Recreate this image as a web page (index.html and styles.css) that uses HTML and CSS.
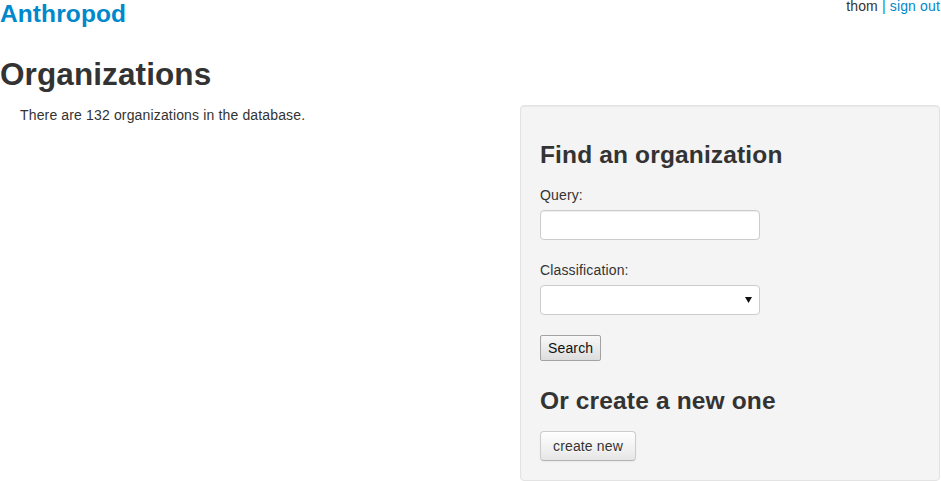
FILE: index.html
```html
<!DOCTYPE html>
<html lang="en">
<head>
<meta charset="utf-8">
<title>Organizations - Anthropod</title>
<link rel="stylesheet" href="styles.css">
</head>
<body>
<div class="container">
  <header class="topbar">
    <a class="brand" href="#">Anthropod</a>
    <div class="usernav">thom <span class="sep">|</span> <a href="#">sign out</a></div>
  </header>
  <h2 class="page-title">Organizations</h2>
  <div class="row">
    <div class="main">
      <p class="summary">There are 132 organizations in the database.</p>
    </div>
    <aside class="well">
      <h3 class="well-title">Find an organization</h3>
      <form class="search-form">
        <div class="field">
          <label class="field-label" for="q">Query:</label>
          <input class="text-input" id="q" type="text">
        </div>
        <div class="field">
          <label class="field-label" for="c">Classification:</label>
          <div class="select-wrap">
            <select class="select-input" id="c"><option></option></select>
            <svg class="caret" width="7" height="6" viewBox="0 0 7 6"><path d="M0 0H7L3.5 6Z" fill="#111"/></svg>
          </div>
        </div>
        <div class="field field-button">
          <button class="search-btn" type="button">Search</button>
        </div>
      </form>
      <h3 class="well-title">Or create a new one</h3>
      <div class="actions">
        <a class="btn" href="#">create new</a>
      </div>
    </aside>
  </div>
</div>
</body>
</html>
```
FILE: styles.css
```css
html, body {
  margin: 0;
  padding: 0;
  background: #fff;
}
body {
  font-family: "Liberation Sans", Arial, sans-serif;
  font-size: 14px;
  line-height: 20px;
  letter-spacing: 0.15px;
  color: #333;
}
a {
  color: #0088cc;
  text-decoration: none;
}
.container {
  width: 940px;
}
.topbar {
  display: flex;
  justify-content: space-between;
  align-items: flex-start;
  height: 44px;
}
.brand {
  font-size: 24.5px;
  font-weight: bold;
  line-height: 28px;
  letter-spacing: 0.1px;
  color: #0088cc;
}
.usernav {
  line-height: 16px;
  margin-top: -2px;
  color: #333;
}
.usernav .sep {
  color: #0088cc;
}
.page-title {
  font-size: 31.5px;
  font-weight: bold;
  line-height: 40px;
  letter-spacing: 0.1px;
  margin: 10px 0 11px;
  color: #333;
}
.row {
  display: flex;
  align-items: flex-start;
}
.main {
  flex: 1;
  padding-left: 20px;
}
.summary {
  margin: 0;
}
.well {
  width: 420px;
  flex-shrink: 0;
  box-sizing: border-box;
  padding: 19px;
  background: #f4f4f4;
  border: 1px solid #e3e3e3;
  border-radius: 4px;
  box-shadow: inset 0 1px 1px rgba(0, 0, 0, 0.05);
}
.well-title {
  font-size: 24.5px;
  font-weight: bold;
  line-height: 40px;
  letter-spacing: 0.15px;
  margin: 10px 0;
  color: #333;
}
.search-form {
  margin: 0;
}
.field {
  margin-bottom: 20px;
}
.field-button {
  display: flex;
}
.field-label {
  display: block;
  margin-bottom: 5px;
  line-height: 20px;
}
.text-input {
  display: block;
  box-sizing: border-box;
  width: 220px;
  height: 30px;
  margin: 0;
  padding: 4px 6px;
  font: 14px "Liberation Sans", Arial, sans-serif;
  color: #555;
  background: #fff;
  border: 1px solid #ccc;
  border-radius: 4px;
  box-shadow: inset 0 1px 1px rgba(0, 0, 0, 0.075);
  outline: none;
}
.select-wrap {
  position: relative;
  width: 220px;
  height: 30px;
}
.select-input {
  display: block;
  box-sizing: border-box;
  width: 220px;
  height: 30px;
  margin: 0;
  padding: 4px 6px;
  font: 14px "Liberation Sans", Arial, sans-serif;
  color: #555;
  background: #fff;
  border: 1px solid #ccc;
  border-radius: 4px;
  -webkit-appearance: none;
  appearance: none;
  outline: none;
}
.caret {
  position: absolute;
  left: 205px;
  top: 12px;
  pointer-events: none;
}
.search-btn {
  box-sizing: border-box;
  height: 26px;
  margin: 0;
  padding: 0 7px;
  font: 14px "Liberation Sans", Arial, sans-serif;
  letter-spacing: 0.15px;
  color: #111;
  background: linear-gradient(#f8f8f8, #dddddd);
  border: 1px solid #a3a3a3;
  border-radius: 2px;
}
.actions {
  display: flex;
}
.btn {
  display: inline-block;
  box-sizing: border-box;
  height: 30px;
  padding: 4px 12px;
  font-size: 14px;
  line-height: 20px;
  color: #333;
  text-shadow: 0 1px 1px rgba(255, 255, 255, 0.75);
  background: linear-gradient(#ffffff, #e6e6e6);
  border: 1px solid #cccccc;
  border-bottom-color: #b3b3b3;
  border-radius: 4px;
  box-shadow: inset 0 1px 0 rgba(255, 255, 255, 0.2), 0 1px 2px rgba(0, 0, 0, 0.05);
}
```
